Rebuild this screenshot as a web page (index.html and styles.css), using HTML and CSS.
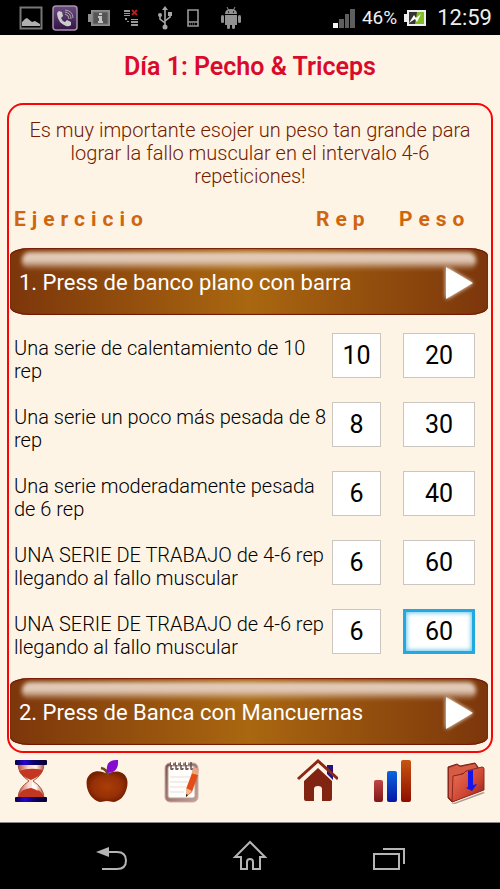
FILE: index.html
```html
<!DOCTYPE html>
<html lang="es">
<head>
<meta charset="utf-8">
<meta name="viewport" content="width=device-width, initial-scale=1">
<title>Día 1: Pecho &amp; Triceps</title>
<link rel="stylesheet" href="styles.css">
</head>
<body>
<header class="status">
  <div class="status-left">
    <svg width="24" height="24" viewBox="0 0 24 24"><path d="M1.5 1.5h21v21h-21z" fill="none" stroke="#777" stroke-width="2"/><path d="M3 20v-4l3-3 2-1 5 4 3-1 5 3v2z" fill="#b0b0b0"/></svg>
    <svg class="call" width="26" height="26" viewBox="0 0 26 26"><defs><linearGradient id="vb" x2="0" y2="1"><stop stop-color="#6b4c80"/><stop offset="1" stop-color="#321344"/></linearGradient></defs><rect x="1" y="1" width="24" height="24" rx="3" fill="url(#vb)" stroke="#a793b2" stroke-width="1.5"/><path d="M7 6l3 1 1 4-2 2q1 3 4 4l2-2 4 2v3q-2 2-5 1Q6 18 5 9q0-2 2-3z" fill="#ccc"/><path d="M13 9q4 1 4 5M13 7q6 1 6 7M13 5q8 1 8 8" fill="none" stroke="#aaa"/></svg>
    <svg class="info" width="24" height="18" viewBox="0 0 24 18"><path d="M4 1h19v16H4v-4H1V5h3z" fill="#8e8e8e"/><path d="M6 3h15v12H6z" fill="#555" stroke="#777"/><path d="M12 4h3v2h-3zM11 7h4v5h1v2h-5v-2h1V9h-1z" fill="#c4c4c4"/></svg>
    <svg class="net" width="16" height="18" viewBox="0 0 16 18"><path d="M1 1h6v2H1zM1 4h6v1H1zM1 6h6v1H1zM8 10h7v1H8zM8 12h7v2H8zM8 15h7v2H8zM2 9h2v2H2zM4 12h2v1H4z" fill="#999"/><path d="M9 1l5 5M14 1L9 6" stroke="#c41616" stroke-width="2"/></svg>
    <svg class="usb" width="14" height="24" viewBox="0 0 14 24"><g fill="none" stroke="#a6a6a6" stroke-width="1.6"><path d="M7 3v18M2 9v4l5 4M12 8v3l-5 4"/></g><path d="M7 0l3 4H4zM10 6h4v4h-4z" fill="#a6a6a6"/><circle cx="2" cy="9" r="2" fill="#a6a6a6"/><circle cx="7" cy="21" r="2.5" fill="#a6a6a6"/></svg>
    <svg class="phone" width="12" height="18" viewBox="0 0 12 18"><path d="M1 1h10v16H1zM1 13h10" fill="none" stroke="#999" stroke-width="1.6"/><path d="M3 15h6" stroke="#888" stroke-dasharray="1 1"/></svg>
    <svg class="droid" width="20" height="24" viewBox="0 0 20 24"><g fill="#929292"><path d="M4 8q0-5 6-5t6 5zM4 9h12v10H4z"/><rect x="0" y="9" width="3" height="8" rx="1.5"/><rect x="17" y="9" width="3" height="8" rx="1.5"/><rect x="6" y="17" width="3" height="6" rx="1.5"/><rect x="11" y="17" width="3" height="6" rx="1.5"/></g><path d="M6 1l1.500 3M14 1l-1.500 3" stroke="#929292"/><circle cx="7.500" cy="6" r=".7"/><circle cx="12.500" cy="6" r=".7"/></svg>
  </div>
  <div class="status-right">
    <svg width="22" height="20" viewBox="0 0 22 20"><path d="M0 15h5v5H0z" fill="#f4f4f4"/><path d="M6 11h5v9H6zM12 6h4v14h-4zM17 1h5v19h-5z" fill="#5e5e5e"/></svg>
    <span class="percent">46%</span>
    <svg class="battery" width="22" height="16" viewBox="0 0 22 16"><path d="M3 0h19v16H3v-4H0V4h3z" fill="#eee"/><path d="M5 2h15v12H5z" fill="#343434"/><path d="M13 2h7v12h-9z" fill="#80bc23"/><path d="M5 13l5-8 2 3 5-4-4 8-2-3z" fill="#fff"/></svg>
    <time>12:59</time>
  </div>
</header>
<main class="page">
  <h1>Día 1: Pecho &amp; Triceps</h1>
  <section class="card">
    <p class="intro">Es muy importante esojer un peso tan grande para lograr la fallo muscular en el intervalo 4-6 repeticiones!</p>
    <table>
      <colgroup><col><col class="col-overlap"><col class="col-rep"><col class="col-weight"></colgroup>
      <thead><tr><th scope="col">Ejercicio</th><th scope="col" colspan="2">Rep</th><th scope="col" class="weight-head">Peso</th></tr></thead>
      <tbody>
        <tr><td class="banner-cell" colspan="4"><button class="banner" type="button"><span>1. Press de banco plano con barra</span><svg width="34" height="40" viewBox="0 0 34 40"><path d="M4 4v32l27-16z"/></svg></button></td></tr>
        <tr class="set"><td colspan="2"><label for="r1">Una serie de calentamiento de 10 rep</label></td><td><input id="r1" value="10"></td><td><input class="weight" aria-label="Peso" value="20"></td></tr>
        <tr class="set"><td colspan="2"><label for="r2">Una serie un poco más pesada de 8 rep</label></td><td><input id="r2" value="8"></td><td><input class="weight" aria-label="Peso" value="30"></td></tr>
        <tr class="set"><td colspan="2"><label for="r3">Una serie moderadamente pesada de 6 rep</label></td><td><input id="r3" value="6"></td><td><input class="weight" aria-label="Peso" value="40"></td></tr>
        <tr class="set"><td colspan="2"><label for="r4">UNA SERIE DE TRABAJO de 4-6 rep llegando al fallo muscular</label></td><td><input id="r4" value="6"></td><td><input class="weight" aria-label="Peso" value="60"></td></tr>
        <tr class="set"><td colspan="2"><label for="r5">UNA SERIE DE TRABAJO de 4-6 rep llegando al fallo muscular</label></td><td><input id="r5" value="6"></td><td><input class="weight active" aria-label="Peso" value="60"></td></tr>
        <tr><td class="banner-cell" colspan="4"><button class="banner" type="button"><span>2. Press de Banca con Mancuernas</span><svg width="34" height="40" viewBox="0 0 34 40"><path d="M4 4v32l27-16z"/></svg></button></td></tr>
      </tbody>
    </table>
  </section>
</main>
<nav class="tools" aria-label="Herramientas">
  <div class="group">
    <button type="button" aria-label="Temporizador"><svg width="44" height="46" viewBox="0 0 44 46"><defs><linearGradient id="cap"><stop stop-color="#080042"/><stop offset=".3" stop-color="#2406cc"/><stop offset=".6" stop-color="#100068"/><stop offset="1" stop-color="#05002b"/></linearGradient><linearGradient id="glass"><stop stop-color="#bf4d3b"/><stop offset=".4" stop-color="#f6d9cf"/><stop offset=".7" stop-color="#fff1ea"/><stop offset="1" stop-color="#b4513e"/></linearGradient></defs><path d="M9 6h26q0 10-11 17 11 7 11 17H9q0-10 11-17Q9 16 9 6z" fill="url(#glass)" stroke="#a85842"/><path d="M10 13q11-4 24-1-2 6-12 10Q12 18 10 13zM9 39q2-8 13-9 10 1 13 9z" fill="#c33620"/><path d="M23 23l6 10-6-3z" fill="#fff" opacity=".8"/><rect x="6" y="2" width="32" height="5" rx="1" fill="url(#cap)"/><rect x="6" y="39" width="32" height="5" rx="1" fill="url(#cap)"/></svg></button>
    <button type="button" aria-label="Nutrición"><svg width="44" height="46" viewBox="0 0 44 46"><defs><radialGradient id="apple" cy=".5"><stop stop-color="#ac3d08"/><stop offset=".7" stop-color="#963006"/><stop offset="1" stop-color="#782100"/></radialGradient></defs><path d="M23 16C15 11 6 13 3 21c-2 9 3 19 10 22 4 2 6 0 10 0s6 2 10 0c8-3 12-15 10-22-3-9-13-9-20-5z" fill="url(#apple)"/><path d="M24 18q-1-7-7-8" fill="none" stroke="#6e4714" stroke-width="2.500"/><path d="M23 15q-2-14 11-13 1 13-11 13z" fill="#850bd2"/></svg></button>
    <button type="button" aria-label="Notas"><svg width="44" height="46" viewBox="0 0 44 46"><defs><linearGradient id="note" x2="1" y2="1"><stop stop-color="#7b524b"/><stop offset="1" stop-color="#c5a199"/></linearGradient></defs><rect x="6" y="5" width="33" height="39" rx="5" fill="url(#note)" stroke="#c8afa5"/><rect x="9" y="8" width="27" height="32" rx="2" fill="#fffefa" stroke="#b8a39a"/><path d="M11 19h20M11 24h18M11 29h16M11 34h14" stroke="#e2dfdb"/><path d="M12 4v7q2 1 2-1M17 4v7q2 1 2-1M22 4v7q2 1 2-1M27 4v7q2 1 2-1M32 4v7q2 1 2-1" fill="none" stroke="#64504e" stroke-width="1.500"/><path d="M13 3v4M18 3v4M23 3v4M28 3v4" stroke="#fff" stroke-width="2"/><path d="M33 15l6 2-6 17-6 5 0-8z" fill="#e44d19"/><path d="M27 30l6 3-6 6z" fill="#f0bb8c"/><path d="M27 36l2 1-2 2z" fill="#222"/><path d="M34 9l6 2-1 5-6-2z" fill="#eba091"/><path d="M33 14l6 2" stroke="#dfb56b" stroke-width="2"/></svg></button>
  </div>
  <div class="group">
    <button type="button" aria-label="Inicio"><svg width="44" height="46" viewBox="0 0 44 46"><path d="M33 7h6v15l-6-6z" fill="#231284"/><path d="M4 21L24 3l20 18" fill="none" stroke="#8b2713" stroke-width="3"/><path d="M24 10L10 23v18q0 2 2 2h8V31q0-3 4-3t4 3v12h8q2 0 2-2V23z" fill="#812411"/></svg></button>
    <button type="button" aria-label="Estadísticas"><svg width="44" height="46" viewBox="0 0 44 46"><defs><linearGradient id="b1" x2="0" y2="1"><stop stop-color="#c24546"/><stop offset="1" stop-color="#7e1717"/></linearGradient><linearGradient id="b2" x2="0" y2="1"><stop stop-color="#0a65df"/><stop offset="1" stop-color="#0715a5"/></linearGradient><linearGradient id="b3" x2="0" y2="1"><stop stop-color="#c65511"/><stop offset="1" stop-color="#8e0e00"/></linearGradient></defs><rect x="5" y="22" width="9" height="22" rx="2" fill="url(#b1)"/><rect x="18" y="13" width="10" height="31" rx="2" fill="url(#b2)"/><rect x="32" y="2" width="10" height="42" rx="2" fill="url(#b3)"/></svg></button>
    <button type="button" aria-label="Guardar"><svg width="44" height="46" viewBox="0 0 44 46"><defs><linearGradient id="folder" x2="1" y2="1"><stop stop-color="#ee7458"/><stop offset=".6" stop-color="#cc4430"/><stop offset="1" stop-color="#861c13"/></linearGradient></defs><path d="M7 46l32-12 2 1-30 11z" fill="#ad9c90"/><path d="M4 9l9-3 3 2 15-3 3 4v24L8 44l-4-4z" fill="#9e2c20" stroke="#772016"/><path d="M5 10l8-3 3 2 15-3 2 4-23 8-2 24-3-3z" fill="#d65c46"/><path d="M9 18l10-2 3-3 16-4q2 0 2 2v21L8 44z" fill="url(#folder)" stroke="#8b281d"/><path d="M24 13l5-1v15l4-1-5 7-6-3 2-1z" fill="#1714e8"/></svg></button>
  </div>
</nav>
<footer class="system">
  <button type="button" aria-label="Atrás"><svg width="36" height="36" viewBox="0 0 36 36"><path d="M3 13l13-5v10z" fill="#b5b5b5"/><path d="M15 13h9q9 0 9 8.500t-9 8.500H9" fill="none" stroke="#b5b5b5" stroke-width="2"/></svg></button>
  <button type="button" aria-label="Inicio del sistema"><svg width="36" height="36" viewBox="0 0 36 36"><path d="M18 3L3 18h6v12h6v-7q0-3 3-3t3 3v7h7V18h5z" fill="none" stroke="#b5b5b5" stroke-width="2"/></svg></button>
  <button type="button" aria-label="Recientes"><svg width="36" height="36" viewBox="0 0 36 36"><path d="M3 15h25v15H3zM12 10h21v15" fill="none" stroke="#b5b5b5" stroke-width="2"/></svg></button>
</footer>
</body>
</html>
```

FILE: styles.css
```css
* { box-sizing: border-box; }
body {
  margin: 0;
  min-height: 100vh;
  display: flex;
  flex-direction: column;
  background: #fef4e5;
  color: #000;
  font-family: Roboto, "Liberation Sans", sans-serif;
  font-size: 20px;
  font-weight: 340;
  line-height: 23px;
}
button { border: 0; padding: 0; background: none; font: inherit; }
svg { display: block; flex: none; }

.status {
  height: 35px;
  display: flex;
  align-items: center;
  justify-content: space-between;
  padding: 0 8px 0 19px;
  background: #000;
  color: #eee;
  font-weight: 400;
}
.status-left, .status-right { display: flex; align-items: center; }
.status-left { gap: 9px; }
.info { margin-right: 3px; }
.net { margin-right: 10px; }
.phone { margin: 0 13px 0 6px; }
.status-right { gap: 7px; }
.percent { font-size: 19px; }
.status-right time { font-size: 22px; margin-left: 4px; }

.page {
  flex: 1;
  display: flex;
  flex-direction: column;
  padding: 0 7px;
}
h1 {
  margin: 0;
  padding: 18px 0 22px;
  color: #d90a2c;
  font-size: 25px;
  font-weight: 600;
  line-height: 28px;
  text-align: center;
}
.card {
  flex: 1;
  padding: 1px;
  border: 2px solid #fa0505;
  border-radius: 16px;
}
.intro {
  margin: 13px 16px 17px;
  color: #702000;
  text-align: center;
}
table { width: 100%; table-layout: fixed; border-collapse: collapse; }
.col-overlap { width: 14px; }
.col-rep { width: 58px; }
.col-weight { width: 102px; }
th {
  height: 28px;
  padding: 0;
  color: #d0650f;
  font-size: 21px;
  font-weight: 700;
  letter-spacing: 6px;
  text-align: left;
}
th:first-child { padding-left: 4px; }
.weight-head { padding-left: 11px; }
td { padding: 0; }

.banner-cell { padding: 15px 2px 8px 0; }
.set + tr .banner-cell { padding: 10px 2px 0 0; }
.banner {
  position: relative;
  width: 100%;
  height: 67px;
  display: flex;
  align-items: center;
  justify-content: space-between;
  padding: 2px 12px 0 9px;
  border-radius: 20px / 8px;
  background: linear-gradient(90deg, #7c360b, #aa6710 50%, #7c360b);
  box-shadow: inset 0 1px 1px #731300, inset 0 -1px 1px #731300;
  color: #fff;
  font-size: 22px;
  font-weight: 400;
}
.banner::before {
  content: "";
  position: absolute;
  top: 4px;
  left: 12px;
  right: 12px;
  height: 18px;
  border-radius: 8px;
  background: linear-gradient(#e6d0bc, #dfc7b5 50%, transparent);
  filter: blur(2px);
}
.banner path { fill: #fff; filter: drop-shadow(0 0 2px #fff); }

.set td { height: 69px; padding-top: 10px; vertical-align: top; }
.set td:first-child { padding: 14px 0 0 4px; }
label { display: block; }
input {
  display: block;
  width: 49px;
  height: 45px;
  margin-left: 2px;
  padding: 0;
  border: 1px solid #cbc6bf;
  border-radius: 0;
  background: #fff;
  color: #000;
  font: 25px Roboto, "Liberation Sans", sans-serif;
  text-align: center;
  outline: 0;
}
.weight { width: 72px; margin-left: 15px; }
.active { border: 3px solid #23a8e0; box-shadow: inset 0 0 4px 1px #69c8ec; }

.tools {
  height: 69px;
  display: flex;
  justify-content: space-between;
  padding: 5px 12px 0 9px;
}
.group { display: flex; align-items: flex-start; gap: 31px; }
.system {
  height: 67px;
  display: flex;
  align-items: center;
  padding: 2px 42px 0;
  border-top: 1px solid #888;
  background: #000;
}
.system button { flex: 1; display: flex; justify-content: center; }
```
